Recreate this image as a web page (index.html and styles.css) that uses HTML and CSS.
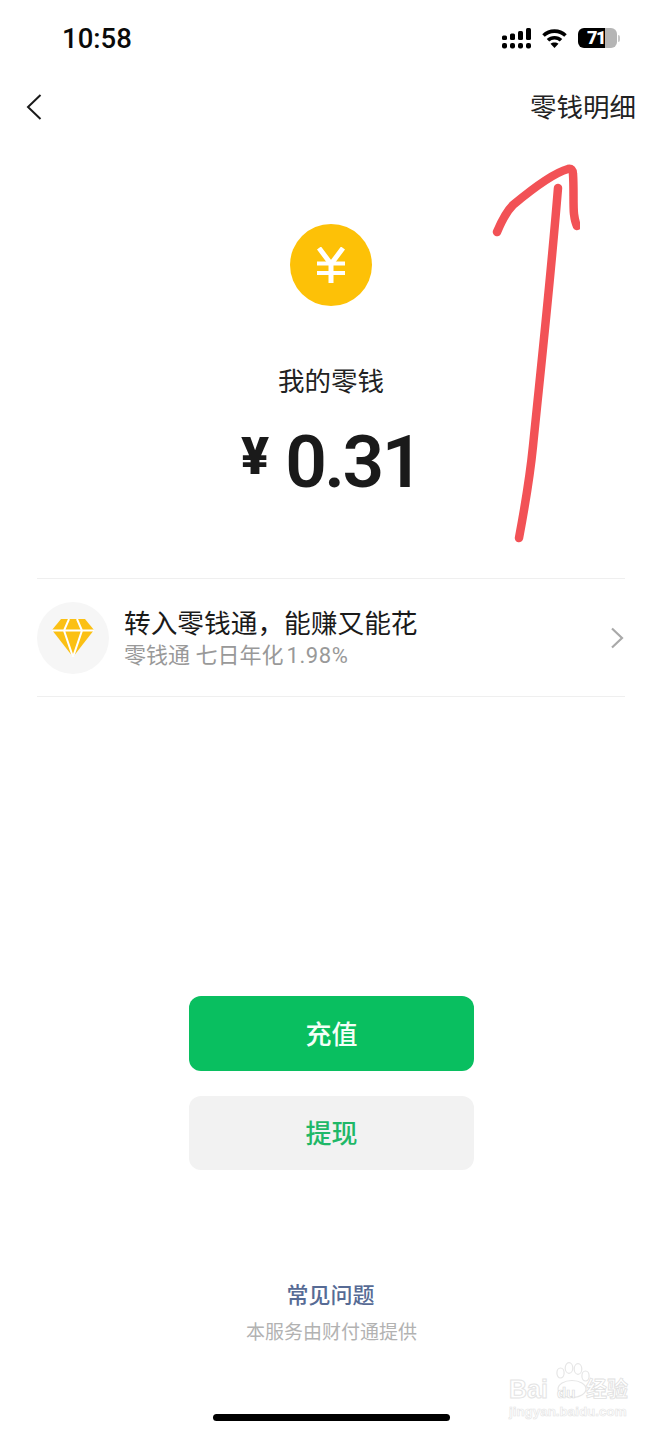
FILE: index.html
```html
<!DOCTYPE html>
<html lang="zh-CN">
<head>
<meta charset="utf-8">
<title>我的零钱</title>
<link rel="stylesheet" href="styles.css">
</head>
<body>
<div class="page">
  <header class="status">
    <span class="time">10:58</span>
    <div class="status-icons">
      <svg class="signal" viewBox="0 0 32 21" width="32" height="21" fill="#000">
        <rect x="1" y="7.5" width="5" height="4.5" rx="1.5"/><rect x="9" y="5.5" width="5" height="6.5" rx="1.5"/><rect x="17" y="3" width="5" height="9" rx="1.5"/><rect x="25" y="0" width="5" height="12" rx="1.5"/>
        <rect x="1" y="15" width="5" height="5.5" rx="2"/><rect x="9" y="15" width="5" height="5.5" rx="2"/><rect x="17" y="15" width="5" height="5.5" rx="2"/><rect x="25" y="15" width="5" height="5.5" rx="2"/>
      </svg>
      <svg class="wifi" viewBox="0 0 25 20" width="25" height="20" fill="none" stroke="#000" stroke-width="3.6">
        <path d="M1.5 7.5C7.5 1.7 17.5 1.7 23.5 7.5"/>
        <path d="M6 12.3C9.5 8.9 15.5 8.9 19 12.3"/>
        <path d="M8.5 15.8 12.5 20 16.5 15.8C14.5 14 10.5 14 8.5 15.8Z" fill="#000" stroke="none"/>
      </svg>
      <div class="battery"><span class="battery-num">71</span></div>
      <span class="battery-nub"></span>
    </div>
  </header>

  <nav class="nav">
    <svg class="back" viewBox="0 0 16 26" width="16" height="26" fill="none" stroke="#1a1a1a" stroke-width="2">
      <path d="M14.5 1 2 13 14.5 25"/>
    </svg>
    <span class="nav-link">零钱明细</span>
  </nav>

  <section class="hero">
    <div class="coin">
      <svg viewBox="0 0 30 36" width="30" height="36" fill="none" stroke="#fff" stroke-width="5">
        <path d="M3 1 15 17 27 1M15 15V36"/>
        <path d="M1 16.5H29M1 26H29" stroke-width="4"/>
      </svg>
    </div>
    <div class="label">我的零钱</div>
    <div class="amount"><span class="yen">¥</span><span class="digits">0.31</span></div>
  </section>

  <section class="row">
    <div class="row-icon">
      <svg viewBox="0 0 42 38" width="42" height="38">
        <path d="M9 0H33L42 11 21 38 0 11Z" fill="#fbc014"/>
        <path d="M0 11.5H42M21 38 12 11.5 17 0M21 38 30 11.5 25 0" fill="none" stroke="#fff" stroke-width="2"/>
      </svg>
    </div>
    <div class="row-text">
      <div class="row-title">转入零钱通，能赚又能花</div>
      <div class="row-sub">零钱通 七日年化<span class="row-rate">1.98%</span></div>
    </div>
    <svg class="row-arrow" viewBox="0 0 14 22" width="14" height="22" fill="none" stroke="#a9a9a9" stroke-width="2.2">
      <path d="M2 1.5 12 11 2 20.5"/>
    </svg>
  </section>

  <div class="actions">
    <div class="btn btn-primary">充值</div>
    <div class="btn btn-secondary">提现</div>
  </div>

  <footer class="foot">
    <div class="faq">常见问题</div>
    <div class="provider">本服务由财付通提供</div>
  </footer>

  <div class="home-bar"></div>

  <svg class="arrow" viewBox="0 0 100 390" width="100" height="390" fill="none" stroke="#f25256" stroke-width="8.5" stroke-linecap="round" stroke-linejoin="round">
    <path d="M39 382C45 350 50 320 53 290C60 220 70 130 78 32"/>
    <path d="M17 76C22 64 27 55 33 49C45 39 70 18 88 13Q93 12 93 18C94 32 93 50 94 58Q95 66 97 70"/>
  </svg>

  <div class="watermark">
    <svg class="paw" viewBox="0 0 36 36" width="36" height="36" fill="#fff" stroke="#e6e6e6" stroke-width="1.2">
      <ellipse cx="4.5" cy="11" rx="3.6" ry="5"/><ellipse cx="13" cy="6" rx="3.8" ry="5.3"/><ellipse cx="22" cy="7" rx="3.8" ry="5.3"/><ellipse cx="29.5" cy="14" rx="3.6" ry="5"/>
      <ellipse cx="16" cy="27" rx="14" ry="8.5"/>
    </svg>
    <div class="wm-line">
      <span class="wm-bai">Bai</span><span class="wm-du">du</span><span class="wm-cn">经验</span>
    </div>
    <div class="wm-url">jingyan.baidu.com</div>
  </div>
</div>
</body>
</html>
```

FILE: styles.css
```css
* { box-sizing: border-box; }
html, body { margin: 0; padding: 0; background: #fff; }
body { font-family: Roboto, "Noto Sans CJK SC", sans-serif; color: #1a1a1a; }

.page { position: relative; width: 663px; height: 1434px; overflow: hidden; display: flex; flex-direction: column; background: #fff; }

.status { height: 76px; padding: 0 43px 0 62px; display: flex; align-items: center; justify-content: space-between; flex: none; }
.time { font-size: 27.5px; font-weight: 500; color: #0a0a0a; }
.status-icons { display: flex; align-items: center; }
.signal { margin-right: 9px; }
.wifi { margin-right: 11px; }
.battery { width: 39px; height: 20px; border-radius: 6px; background: linear-gradient(90deg, #000 0 69%, #b5b5b5 69% 100%); display: flex; align-items: center; padding-left: 9px; }
.battery-num { font-size: 18px; font-weight: 900; color: #fff; line-height: 20px; letter-spacing: -1.5px; }
.battery-nub { width: 2px; height: 7px; margin-left: 1px; background: #c8c8c8; border-radius: 0 2px 2px 0; }

.nav { height: 62px; padding: 0 27px 0 26px; display: flex; align-items: center; justify-content: space-between; flex: none; }
.nav-link { font-size: 26.5px; color: #222; line-height: 36px; padding-top: 2px; }

.hero { display: flex; flex-direction: column; align-items: center; padding: 86px 1px 0 0; flex: none; }
.coin { width: 82px; height: 82px; border-radius: 50%; background: #fdc107; display: flex; align-items: center; justify-content: center; }
.label { margin-top: 58px; font-size: 26.5px; line-height: 36px; color: #222; height: 35px; }
.amount { margin-top: 22px; height: 80px; display: flex; align-items: flex-start; gap: 16px; }
.yen { font-size: 52px; font-weight: 900; line-height: 56px; margin-top: 8px; color: #1a1a1a; }
.digits { font-size: 73px; font-weight: 600; line-height: 80px; margin-top: 1px; letter-spacing: -2.5px; color: #1a1a1a; }

.row { margin: 77px 38px 0 37px; height: 119px; border-top: 1px solid #efefef; border-bottom: 1px solid #efefef; display: flex; align-items: center; flex: none; }
.row-icon { width: 72px; height: 72px; border-radius: 50%; background: #f6f6f6; display: flex; align-items: center; justify-content: center; flex: none; margin-right: 15px; }
.row-text { flex: 1; padding-top: 3px; }
.row-title { font-size: 26.7px; line-height: 34px; color: #1a1a1a; }
.row-sub { font-size: 22px; line-height: 30px; color: #999; }
.row-rate { margin-left: 3px; letter-spacing: .6px; }
.row-arrow { flex: none; margin-right: 1px; }

.actions { margin-top: 299px; display: flex; flex-direction: column; align-items: center; gap: 25px; flex: none; }
.btn { width: 285px; height: 75px; border-radius: 12px; display: flex; align-items: center; justify-content: center; font-size: 26px; font-weight: 500; padding-bottom: 3px; }
.btn-primary { background: #09bf60; color: #f4fff8; }
.btn-secondary { background: #f2f2f2; color: #1fb868; height: 74px; }

.foot { margin-top: 111px; display: flex; flex-direction: column; align-items: center; flex: none; }
.faq { font-size: 22px; line-height: 30px; color: #576b95; font-weight: 500; margin-right: 2px; }
.provider { margin-top: 9px; font-size: 19px; line-height: 26px; color: #b2b2b2; }

.home-bar { margin: 68px auto 0; width: 237px; height: 7px; border-radius: 4px; background: #000; flex: none; }

.arrow { position: absolute; left: 480px; top: 156px; }

.watermark { position: absolute; left: 509px; top: 1362px; width: 120px; height: 58px; }
.paw { position: absolute; left: 47px; top: 0; }
.wm-line { position: absolute; left: 0; top: 14px; display: flex; align-items: center; height: 26px; }
.wm-bai { font-family: "Liberation Sans", sans-serif; font-size: 25px; font-weight: 700; color: #fff; -webkit-text-stroke: 1px #e4e4e4; width: 48px; }
.wm-du { font-family: "Liberation Sans", sans-serif; font-size: 15px; font-weight: 700; color: #fff; -webkit-text-stroke: .7px #dcdcdc; width: 29px; position: relative; top: 3px; }
.wm-cn { font-size: 21px; font-weight: 700; color: #fff; -webkit-text-stroke: .8px #e0e0e0; white-space: nowrap; line-height: 26px; }
.wm-url { position: absolute; left: 0; top: 42px; font-family: "Liberation Sans", sans-serif; font-size: 13.4px; font-weight: 700; line-height: 16px; color: #fff; -webkit-text-stroke: .6px #e4e4e4; white-space: nowrap; }
```
